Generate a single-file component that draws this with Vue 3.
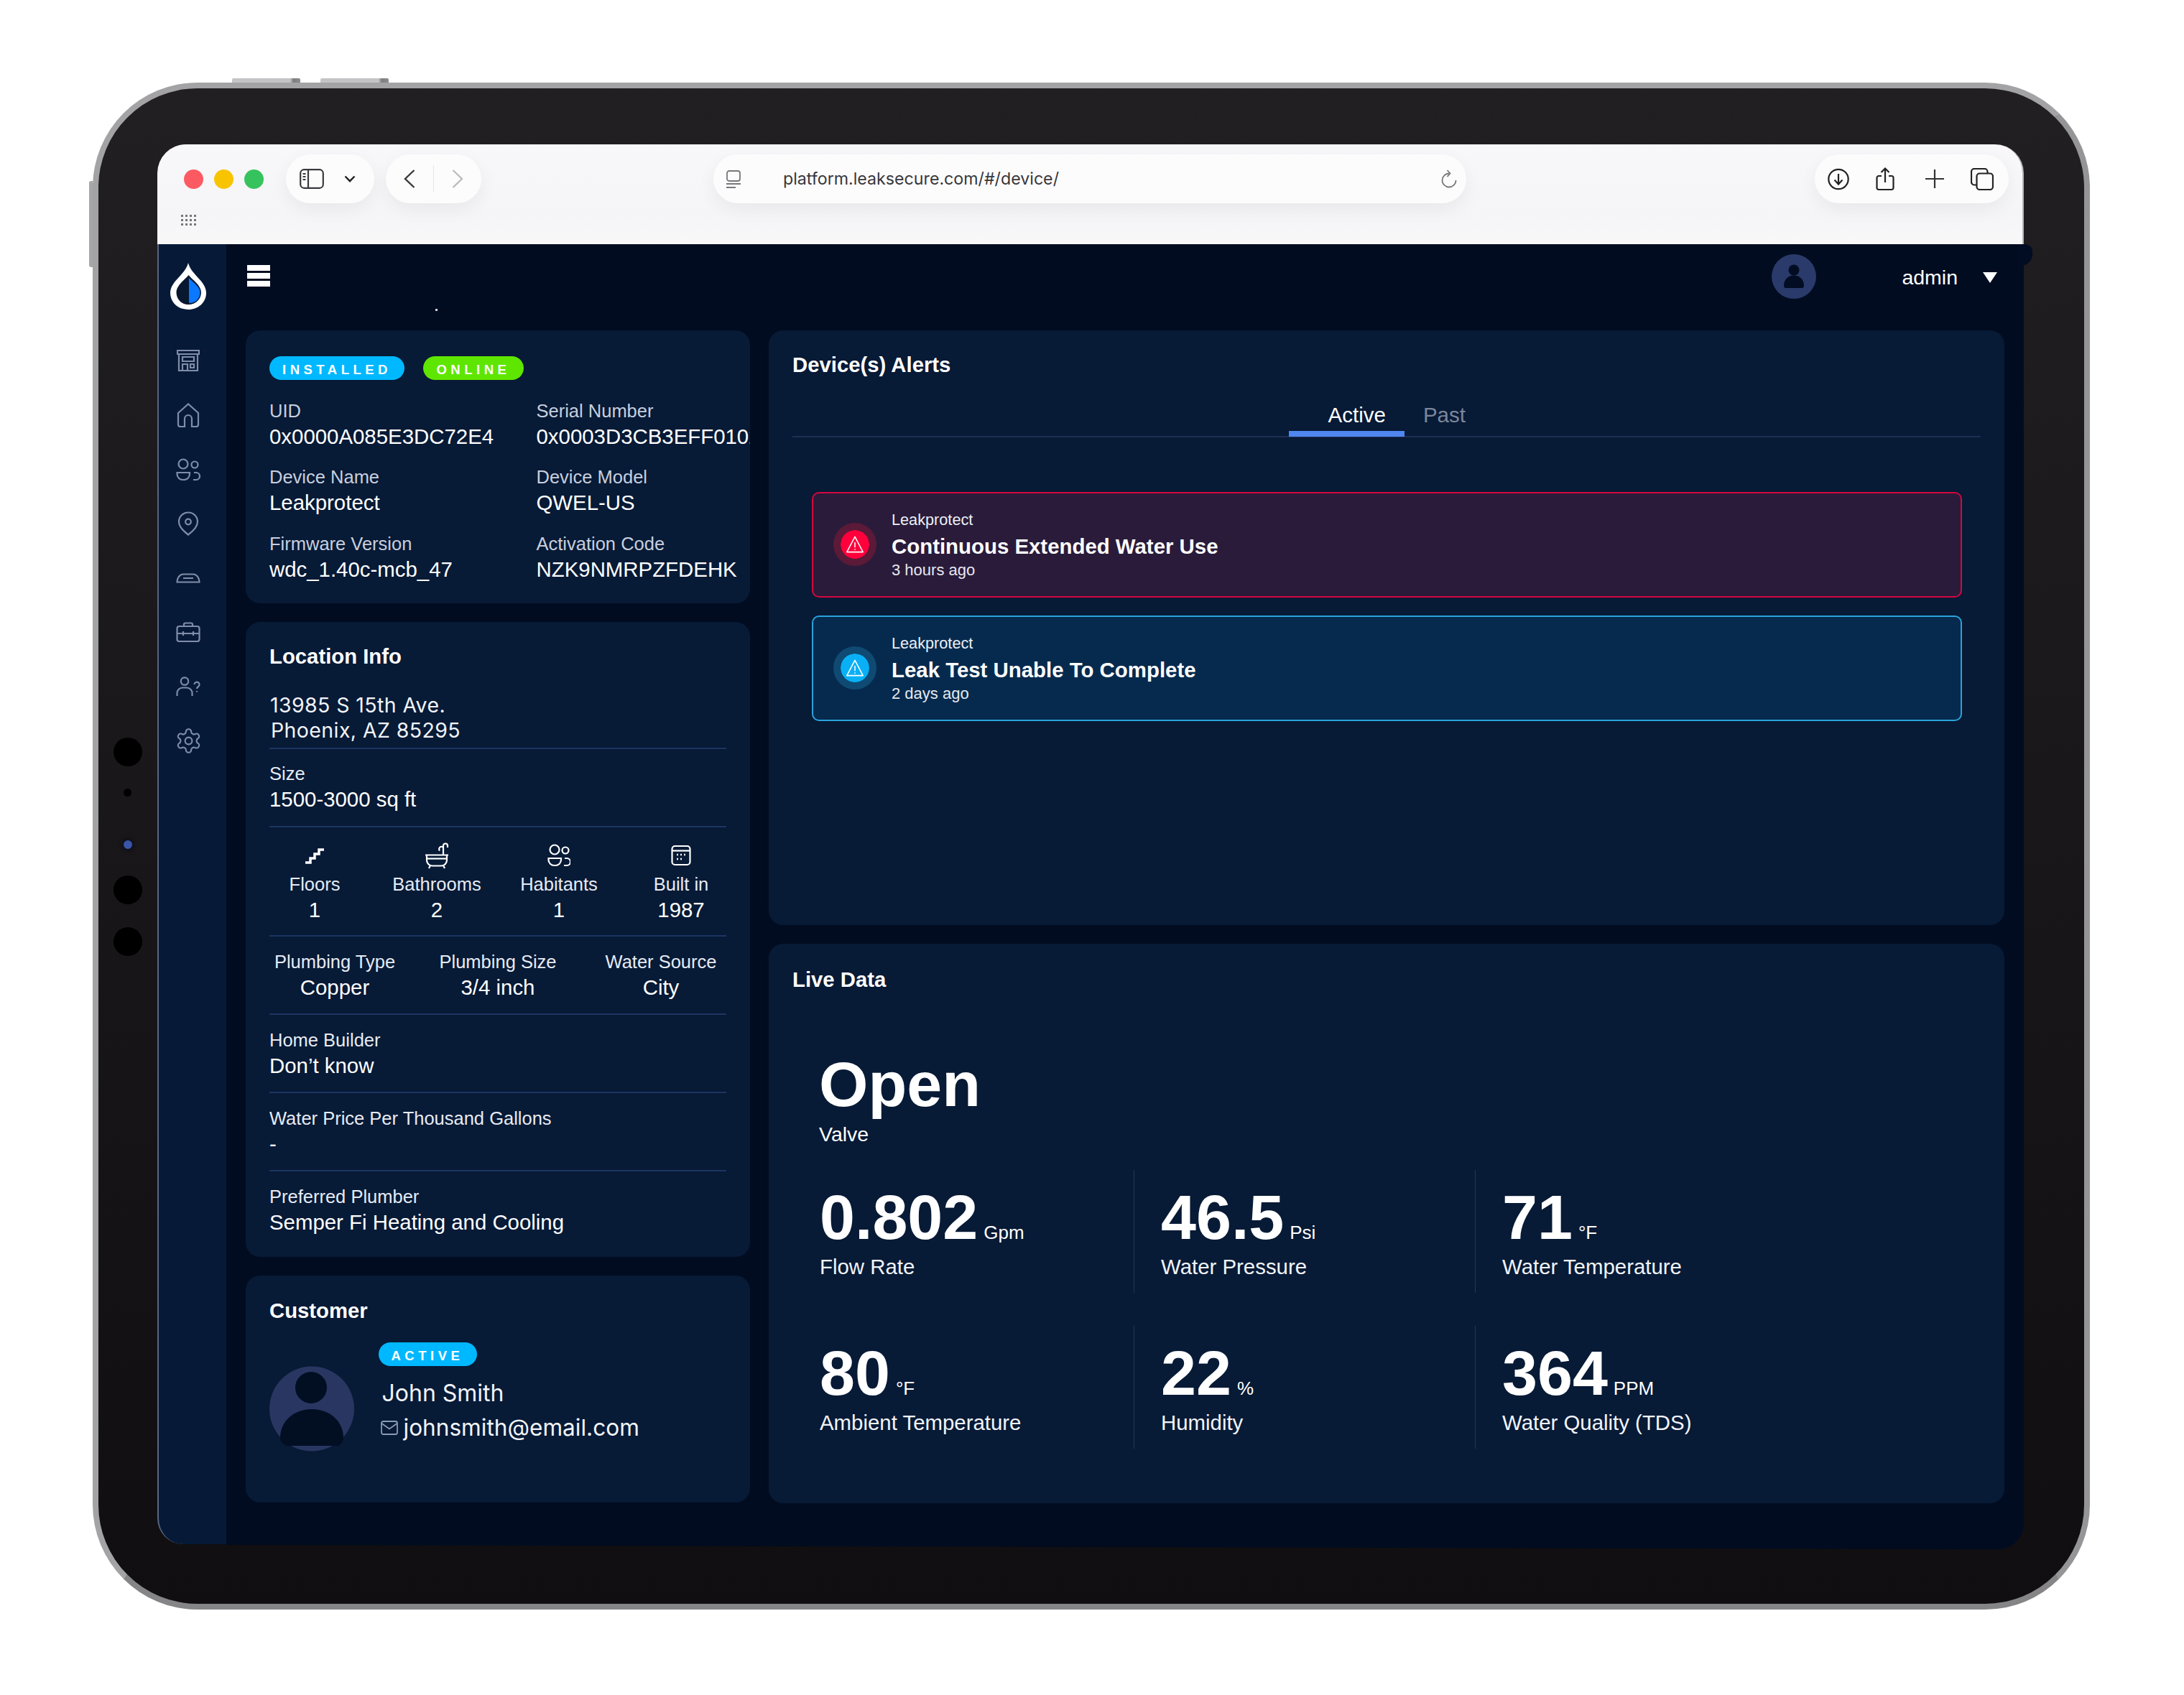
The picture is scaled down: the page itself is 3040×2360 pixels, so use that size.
<script setup>
const deviceRows = [
  { label: 'UID', value: '0x0000A085E3DC72E4' },
  { label: 'Serial Number', value: '0x0003D3CB3EFF0102' },
  { label: 'Device Name', value: 'Leakprotect' },
  { label: 'Device Model', value: 'QWEL-US' },
  { label: 'Firmware Version', value: 'wdc_1.40c-mcb_47' },
  { label: 'Activation Code', value: 'NZK9NMRPZFDEHK' },
]

const plumbing = [
  { label: 'Plumbing Type', value: 'Copper' },
  { label: 'Plumbing Size', value: '3/4 inch' },
  { label: 'Water Source', value: 'City' },
]

const alerts = [
  { id: 1, tone: 'danger', title: 'Continuous Extended Water Use', time: '3 hours ago' },
  { id: 2, tone: 'info', title: 'Leak Test Unable To Complete', time: '2 days ago' },
]

const readings = [
  { value: '0.802', unit: 'Gpm', label: 'Flow Rate' },
  { value: '46.5', unit: 'Psi', label: 'Water Pressure' },
  { value: '71', unit: '°F', label: 'Water Temperature' },
  { value: '80', unit: '°F', label: 'Ambient Temperature' },
  { value: '22', unit: '%', label: 'Humidity' },
  { value: '364', unit: 'PPM', label: 'Water Quality (TDS)' },
]
</script>

<template>
  <div class="page">
    <div class="device">
      <i class="btn-top one"></i>
      <i class="btn-top two"></i>
      <i class="btn-side"></i>
      <i class="cam c1"></i>
      <i class="cam c2"></i>
      <i class="cam c3"></i>
      <i class="cam c4"></i>
      <i class="cam c5"></i>

      <div class="screen">
        <header class="chrome">
          <div class="chrome-row">
            <div class="lights">
              <span class="light red"></span>
              <span class="light yellow"></span>
              <span class="light green"></span>
            </div>
            <div class="pill pill-side">
              <svg width="34" height="28" viewBox="0 0 34 28" fill="none" stroke="#3a3a3e" stroke-width="2.2">
                <rect x="1.2" y="1.2" width="31.6" height="25.6" rx="5" />
                <path d="M12 1.5v25" />
                <path d="M4.5 7h4M4.5 11h4M4.5 15h4" stroke-width="1.8" />
              </svg>
              <svg width="16" height="10" viewBox="0 0 16 10" fill="none" stroke="#222" stroke-width="2.4">
                <path d="M1.5 1.5 8 8.2l6.5-6.7" />
              </svg>
            </div>
            <div class="pill pill-nav">
              <svg width="16" height="26" viewBox="0 0 16 26" fill="none" stroke="#3a3a3e" stroke-width="2.4">
                <path d="M14.5 1 2 13l12.5 12" />
              </svg>
              <span class="nav-sep"></span>
              <svg width="16" height="26" viewBox="0 0 16 26" fill="none" stroke="#bcbcc0" stroke-width="2.4">
                <path d="M1.5 1 14 13 1.500 25" />
              </svg>
            </div>
            <div class="pill pill-url">
              <svg width="20" height="25" viewBox="0 0 20 25" fill="none" stroke="#77777b" stroke-width="1.8">
                <rect x="1" y="1" width="18" height="14" rx="3" />
                <path d="M0 19h20M0 24h13" />
              </svg>
              <span class="url">platform.leaksecure.com/#/device/</span>
              <svg class="reload" width="22" height="26" viewBox="0 0 22 26" fill="none" stroke="#77777b" stroke-width="1.8">
                <path d="M11 5.500a9.500 9.500 0 1 0 9.500 9.500" />
                <path d="M8.500 1 12.500 5.500 8.500 10" />
              </svg>
            </div>
            <div class="pill pill-actions">
              <svg width="30" height="31" viewBox="0 0 30 31" fill="none" stroke="#222" stroke-width="2.2">
                <circle cx="15" cy="15.500" r="13.700" />
                <path d="M15 8v14M9.500 16.500 15 22.500l5.500-6" />
              </svg>
              <svg width="26" height="33" viewBox="0 0 26 33" fill="none" stroke="#222" stroke-width="2.2">
                <path d="M8 12H4a2.500 2.500 0 0 0-2.500 2.500v14A2.500 2.500 0 0 0 4 31h18a2.500 2.500 0 0 0 2.500-2.500v-14A2.500 2.500 0 0 0 22 12h-4" />
                <path d="M13 21V1.500M7.500 7 13 1.500 18.500 7" />
              </svg>
              <svg class="plus" width="26" height="26" viewBox="0 0 26 26" fill="none" stroke="#333" stroke-width="2.200">
                <path d="M13 0v26M0 13h26" />
              </svg>
              <svg width="32" height="31" viewBox="0 0 32 31" fill="none" stroke="#222" stroke-width="2.200">
                <rect x="8.500" y="7.500" width="22.500" height="22.500" rx="4" />
                <path d="M8 23.500H5a4 4 0 0 1-4-4V5a4 4 0 0 1 4-4h14.500a4 4 0 0 1 4 4v2.500" />
              </svg>
            </div>
          </div>
          <svg class="tab-dots" width="22" height="16" viewBox="0 0 22 16" fill="#77777b">
            <path d="M0 0h3v3H0zM6 0h3v3H6zM12 0h3v3h-3zM18 0h3v3h-3zM0 6h3v3H0zM6 6h3v3H6zM12 6h3v3h-3zM18 6h3v3h-3zM0 12h3v3H0zM6 12h3v3H6zM12 12h3v3h-3zM18 12h3v3h-3z" />
          </svg>
        </header>

        <div class="app">
          <aside class="sidebar">
            <svg class="logo" width="50" height="66" viewBox="0 0 50 66">
              <path fill="#fff" d="M25 0C27 8 32 13 38 20 45 27 50 34 50 42 50 55 39 65 25 65 11 65 0 55 0 42 0 34 5 27 12 20 18 13 23 8 25 0Z" />
              <path fill="#08182f" d="M25.500 17C30 23 43 31 43 41 43 51 35 58 25.500 58 16 58 8.500 51 8.500 41 8.500 31 21 23 25.500 17Z" />
              <path fill="#0a78ff" d="M26 21C31 27 41.500 33 41.500 41 41.500 50 35 56 26 56Z" />
            </svg>
            <nav class="side-nav">
              <div class="side-item">
                <svg width="32" height="30" viewBox="0 0 32 30" fill="none">
                  <path d="M1 1h30v5H1zM3 6v23h26V6M8 10h16v6H8zM8 29v-9h7v9M19 20h5v5h-5z" />
                </svg>
              </div>
              <div class="side-item">
                <svg width="32" height="34" viewBox="0 0 32 34" fill="none">
                  <path d="M2 14 16 1.500 30 14v16a3 3 0 0 1-3 3h-6V22a5 5 0 0 0-10 0v11H5a3 3 0 0 1-3-3Z" />
                </svg>
              </div>
              <div class="side-item">
                <svg width="34" height="31" viewBox="0 0 34 31" fill="none">
                  <circle cx="10" cy="8" r="6.500" />
                  <circle cx="26" cy="9" r="4.500" />
                  <path d="M1.500 20H19v2a8 8 0 0 1-8 8H9.500a8 8 0 0 1-8-8ZM25 20h3a5 5 0 0 1 0 10h-4" />
                </svg>
              </div>
              <div class="side-item">
                <svg width="30" height="34" viewBox="0 0 30 34" fill="none">
                  <path d="M15 1.500A13 13 0 0 1 28 14.500C28 22 21 28 15 32.500 9 28 2 22 2 14.500A13 13 0 0 1 15 1.500Z" />
                  <circle cx="15" cy="14.500" r="3.800" />
                </svg>
              </div>
              <div class="side-item">
                <svg width="34" height="14" viewBox="0 0 34 14" fill="none">
                  <path d="M1.500 12.500C1.500 7 5 1.500 10 1.500h14c5 0 8.500 5.500 8.500 11ZM10 7h14" />
                </svg>
              </div>
              <div class="side-item">
                <svg width="34" height="28" viewBox="0 0 34 28" fill="none">
                  <rect x="1.500" y="6" width="31" height="21" rx="3" />
                  <path d="M11 6V3.500a2 2 0 0 1 2-2h8a2 2 0 0 1 2 2V6M1.500 16h31M10 13v6M24 13v6" />
                </svg>
              </div>
              <div class="side-item">
                <svg width="34" height="28" viewBox="0 0 34 28" fill="none">
                  <circle cx="12" cy="6.500" r="5.200" />
                  <path d="M1.500 27v-4a7.500 7.500 0 0 1 7.500-7.500h6a7.500 7.500 0 0 1 7.500 7.500v4M25.500 11a3.500 3.500 0 1 1 5.500 3c-1.500 1-2 1.500-2 3M29 20v1.500" />
                </svg>
              </div>
              <div class="side-item">
                <svg width="39" height="39" viewBox="0 0 24 24" fill="none" class="gear">
                  <path d="M12.220 2h-.44a2 2 0 0 0-2 2v.18a2 2 0 0 1-1 1.730l-.43.25a2 2 0 0 1-2 0l-.15-.08a2 2 0 0 0-2.730.73l-.22.38a2 2 0 0 0 .73 2.730l.15.1a2 2 0 0 1 1 1.720v.51a2 2 0 0 1-1 1.740l-.15.09a2 2 0 0 0-.73 2.730l.22.38a2 2 0 0 0 2.730.73l.15-.08a2 2 0 0 1 2 0l.43.25a2 2 0 0 1 1 1.730V20a2 2 0 0 0 2 2h.44a2 2 0 0 0 2-2v-.18a2 2 0 0 1 1-1.730l.43-.25a2 2 0 0 1 2 0l.15.08a2 2 0 0 0 2.730-.73l.22-.39a2 2 0 0 0-.73-2.730l-.15-.08a2 2 0 0 1-1-1.740v-.5a2 2 0 0 1 1-1.740l.15-.09a2 2 0 0 0 .73-2.730l-.22-.38a2 2 0 0 0-2.730-.73l-.15.08a2 2 0 0 1-2 0l-.43-.25a2 2 0 0 1-1-1.730V4a2 2 0 0 0-2-2z" />
                  <circle cx="12" cy="12" r="3" />
                </svg>
              </div>
            </nav>
          </aside>

          <div class="main">
            <div class="topbar">
              <div class="burger"><span></span><span></span><span></span></div>
              <i class="speck"></i>
              <svg class="top-avatar" width="62" height="62" viewBox="0 0 62 62">
                <circle cx="31" cy="31" r="31" fill="#2a3a6b" />
                <circle cx="31" cy="22" r="7.500" fill="#020c22" />
                <path fill="#020c22" d="M17 44c0-9 6-14.500 14-14.500S45 35 45 44c0 2-1 3-3 3H20c-2 0-3-1-3-3Z" />
              </svg>
              <span class="admin">admin</span>
              <i class="caret"></i>
            </div>

            <div class="content">
              <div class="col-left">
                <section class="card device-card">
                  <div class="badges">
                    <span class="badge blue">INSTALLED</span>
                    <span class="badge green">ONLINE</span>
                  </div>
                  <div class="device-grid">
                    <div v-for="row in deviceRows" :key="row.label" class="field">
                      <div class="label muted">{{ row.label }}</div>
                      <div class="value">{{ row.value }}</div>
                    </div>
                  </div>
                </section>

                <section class="card location-card">
                  <h2 class="card-title">Location Info</h2>
                  <div class="address">
                    <div>13985 S 15th Ave.</div>
                    <div class="addr-2">Phoenix, AZ 85295</div>
                  </div>
                  <div class="section first">
                    <div class="label">Size</div>
                    <div class="value">1500-3000 sq ft</div>
                  </div>
                  <div class="section home-stats">
                    <div class="stat">
                      <svg width="28" height="43" viewBox="0 0 28 43" fill="none" stroke="#fff">
                        <path d="M1 31h7v-6h6v-6h6v-6h7" stroke-width="3.500" />
                      </svg>
                      <div class="label">Floors</div>
                      <div class="value">1</div>
                    </div>
                    <div class="stat">
                      <svg width="34" height="43" viewBox="0 0 34 43" fill="none" stroke="#fff" stroke-width="2.200">
                        <path d="M1 20.500h32M3 20.500v7a8 8 0 0 0 8 8h12a8 8 0 0 0 8-8v-7M8 35l-2 4M26 35l2 4" />
                        <path d="M26 20V7.500a3 3 0 0 1 6 0V10M21 14.500a3 3 0 0 1 5-4.500" />
                        <path d="M4 25.500h26" stroke-width="2.200" />
                      </svg>
                      <div class="label">Bathrooms</div>
                      <div class="value">2</div>
                    </div>
                    <div class="stat">
                      <svg width="32" height="43" viewBox="0 0 32 43" fill="none" stroke="#fff" stroke-width="2.200">
                        <circle cx="10" cy="13" r="6.500" />
                        <circle cx="25" cy="14" r="4.500" />
                        <path d="M1.500 25H19v2a8 8 0 0 1-8 8H9.500a8 8 0 0 1-8-8ZM24 25h3a5 5 0 0 1 0 10h-4" />
                      </svg>
                      <div class="label">Habitants</div>
                      <div class="value">1</div>
                    </div>
                    <div class="stat">
                      <svg width="28" height="43" viewBox="0 0 28 43" fill="none" stroke="#fff" stroke-width="2.200">
                        <rect x="1.500" y="8" width="25" height="26" rx="4" />
                        <path d="M1.500 14.500h25" />
                        <path d="M8 20h2M13 20h2M18 20h2M8 26h2M13 26h2" stroke-width="2.600" />
                      </svg>
                      <div class="label">Built in</div>
                      <div class="value">1987</div>
                    </div>
                  </div>
                  <div class="section plumbing">
                    <div v-for="item in plumbing" :key="item.label" class="stat">
                      <div class="label">{{ item.label }}</div>
                      <div class="value">{{ item.value }}</div>
                    </div>
                  </div>
                  <div class="section">
                    <div class="label">Home Builder</div>
                    <div class="value">Don’t know</div>
                  </div>
                  <div class="section">
                    <div class="label">Water Price Per Thousand Gallons</div>
                    <div class="value">-</div>
                  </div>
                  <div class="section last">
                    <div class="label">Preferred Plumber</div>
                    <div class="value">Semper Fi Heating and Cooling</div>
                  </div>
                </section>

                <section class="card customer-card">
                  <h2 class="card-title">Customer</h2>
                  <div class="customer">
                    <svg class="avatar" width="118" height="119" viewBox="0 0 118 119">
                      <circle cx="59" cy="59.500" r="59" fill="#2a3662" />
                      <circle cx="58" cy="30" r="22" fill="#020e22" />
                      <path fill="#020e22" d="M15 100c0-24 20-40 44-40s44 16 44 40c0 5-3 9-7 11H23c-4-2-8-6-8-11Z" />
                    </svg>
                    <div class="customer-info">
                      <span class="badge blue">ACTIVE</span>
                      <div class="customer-name">John Smith</div>
                      <div class="customer-mail">
                        <svg width="24" height="20" viewBox="0 0 24 20" fill="none" stroke="#8b9ab5" stroke-width="1.800">
                          <rect x="1" y="1" width="22" height="18" rx="2.500" />
                          <path d="m1.500 4 10.500 7.500L22.500 4" />
                        </svg>
                        <span>johnsmith@email.com</span>
                      </div>
                    </div>
                  </div>
                </section>
              </div>

              <div class="col-right">
                <section class="card alerts-card">
                  <h2 class="card-title">Device(s) Alerts</h2>
                  <div class="tabs">
                    <span class="tab active">Active</span>
                    <span class="tab">Past</span>
                  </div>
                  <div class="alert-list">
                    <div v-for="alert in alerts" :key="alert.id" class="alert" :class="alert.tone">
                      <div class="alert-icon">
                        <svg width="26" height="26" viewBox="0 0 22 22" fill="none" stroke="#fff" stroke-width="1.300">
                          <path d="M11 2 20.500 20h-19Z" stroke-linejoin="round" />
                          <path d="M11 8.500v6M11 16.200v1.300" />
                        </svg>
                      </div>
                      <div class="alert-text">
                        <div class="alert-device">Leakprotect</div>
                        <div class="alert-title">{{ alert.title }}</div>
                        <div class="alert-time">{{ alert.time }}</div>
                      </div>
                    </div>
                  </div>
                </section>

                <section class="card live-card">
                  <h2 class="card-title">Live Data</h2>
                  <div class="valve">Open</div>
                  <div class="valve-label">Valve</div>
                  <div class="live-grid">
                    <div v-for="item in readings" :key="item.label" class="reading">
                      <div class="reading-value">
                        <span class="number">{{ item.value }}</span>
                        <span class="unit">{{ item.unit }}</span>
                      </div>
                      <div class="reading-label">{{ item.label }}</div>
                    </div>
                  </div>
                </section>
              </div>
            </div>
          </div>
        </div>
        <i class="corner-bump"></i>
      </div>
    </div>
  </div>
</template>

<style scoped>
.page {
  width: 3040px;
  height: 2360px;
  padding: 115px 0 0 129px;
  box-sizing: border-box;
  background: #fff;
  font-family: "Liberation Sans", Arial, sans-serif;
  color: #fff;
  overflow: hidden;
}

.device {
  position: relative;
  width: 2780px;
  height: 2126px;
  box-sizing: border-box;
  border: 8px solid #a3a2a5;
  border-bottom-color: #858487;
  border-right-color: #959497;
  border-radius: 146px;
  background: linear-gradient(#211f21, #100e10);
  padding: 78px 0 0 82px;
}

.btn-top {
  position: absolute;
  top: -14px;
  height: 6px;
  width: 95px;
  background: linear-gradient(90deg, #c4c4c6 85%, #7d7d80 90%, #8d8d90);
  border-radius: 2px 2px 0 0;
}
.btn-top.one { left: 186px; }
.btn-top.two { left: 309px; }
.btn-side {
  position: absolute;
  left: -13px;
  top: 129px;
  width: 5px;
  height: 120px;
  background: #a6a6a8;
  border-radius: 3px 0 0 3px;
}

.cam {
  position: absolute;
  left: 41px;
  width: 40px;
  height: 40px;
  margin-left: -20px;
  border-radius: 50%;
  background: #000;
}
.cam.c1 { top: 904px; }
.cam.c2 { top: 975px; left: 55px; width: 11px; height: 11px; }
.cam.c3 {
  top: 1047px;
  left: 55px;
  width: 12px;
  height: 12px;
  background: #3a55a8;
  box-shadow: 0 0 5px 2px rgba(10, 14, 30, 0.9);
}
.cam.c4 { top: 1096px; }
.cam.c5 { top: 1168px; }

.screen {
  position: relative;
  width: 2598px;
  height: 1956px;
  display: flex;
  flex-direction: column;
}

.chrome {
  height: 139px;
  box-sizing: border-box;
  padding-top: 14px;
  background: linear-gradient(#f8f7f9, #f5f4f6 70%, #f8f8f9);
  border-radius: 40px 40px 0 0;
  border-right: 2px solid #b5b5b8;
  flex: none;
}

.chrome-row {
  display: flex;
  align-items: center;
  height: 68px;
}

.lights {
  display: flex;
  gap: 15px;
  margin-left: 36.500px;
  margin-right: 31.500px;
}

.light {
  width: 27px;
  height: 27px;
  border-radius: 50%;
}
.light.red { background: #fb5a62; }
.light.yellow { background: #f8c400; }
.light.green { background: #36c35d; }

.pill {
  display: flex;
  align-items: center;
  height: 68px;
  box-sizing: border-box;
  background: #fdfcfd;
  border-radius: 34px;
  box-shadow: 0 8px 26px rgba(0, 0, 0, 0.06);
}

.pill-side {
  width: 123px;
  padding-left: 19px;
  gap: 28px;
  margin-right: 16px;
}

.pill-nav {
  width: 133px;
  padding-left: 25px;
  margin-right: 323px;
}

.nav-sep {
  width: 1px;
  height: 38px;
  background: #e7e7ea;
  margin: 0 25px;
}

.pill-url {
  width: 1048px;
  padding-left: 18px;
  margin-right: 485px;
}

.url {
  margin-left: 59px;
  font-family: Inter, sans-serif;
  font-size: 23.200px;
  color: #37373b;
}

.reload {
  margin-left: auto;
  margin-right: 13px;
}

.pill-actions {
  width: 270px;
  padding-left: 18px;
  gap: 37px;
}

.pill-actions .plus {
  margin-left: 6px;
}

.tab-dots {
  display: block;
  margin: 16px 0 0 33px;
}

.app {
  flex: 1;
  display: flex;
  min-height: 0;
}

.sidebar {
  width: 96px;
  box-sizing: border-box;
  flex: none;
  margin-bottom: 7px;
  background: #061a38;
  border-left: 2px solid #5a6480;
  border-bottom-left-radius: 36px;
  padding: 26px 12px 0 0;
  display: flex;
  flex-direction: column;
  align-items: center;
}

.logo {
  display: block;
}

.side-nav {
  margin-top: 32px;
}

.side-item {
  height: 75.700px;
  width: 44px;
  display: flex;
  align-items: center;
  justify-content: center;
}

.side-item svg {
  stroke: #7f8da8;
  stroke-width: 2.200;
}

.side-item svg.gear {
  stroke-width: 1.300;
}

.main {
  flex: 1;
  min-width: 0;
  background: #010c20;
  border-bottom-right-radius: 36px;
  /* the photographed screen sits slightly tilted along its bottom edge */
  clip-path: polygon(0 0, 100% 0, 100% 100%, 97% 100%, 0 calc(100% - 6px));
  display: flex;
  flex-direction: column;
}

.topbar {
  position: relative;
  height: 120px;
  flex: none;
  box-sizing: border-box;
  padding: 14px 37px 0 29px;
  display: flex;
  align-items: flex-start;
}

.burger {
  display: flex;
  flex-direction: column;
  gap: 3px;
  width: 32px;
  margin-top: 15px;
}

.burger span {
  height: 8px;
  background: #fff;
}

.speck {
  position: absolute;
  left: 291px;
  top: 90px;
  width: 3px;
  height: 3px;
  background: #cfd5e0;
}

.top-avatar {
  margin-left: auto;
}

.admin {
  margin: 1px 0 0 119px;
  font-size: 28.500px;
  line-height: 62px;
  color: #fff;
}

.caret {
  margin: 25px 0 0 35px;
  width: 0;
  height: 0;
  border-left: 10.500px solid transparent;
  border-right: 10.500px solid transparent;
  border-top: 15px solid #fff;
}

.content {
  flex: 1;
  min-height: 0;
  display: flex;
  gap: 26px;
  padding: 0 27px 64px;
}

.col-left {
  width: 702px;
  flex: none;
  display: flex;
  flex-direction: column;
  gap: 26px;
}

.col-right {
  flex: 1;
  min-width: 0;
  display: flex;
  flex-direction: column;
  gap: 26px;
}

.card {
  background: #071a36;
  border-radius: 20px;
  box-sizing: border-box;
  padding: 0 33px;
  overflow: hidden;
}

.card-title {
  margin: 0;
  font-size: 29.300px;
  line-height: 36px;
  font-weight: 700;
}

.device-card {
  height: 380px;
  padding-top: 36px;
}

.badges {
  display: flex;
  gap: 26px;
}

.badge {
  display: inline-block;
  height: 33px;
  line-height: 37px;
  box-sizing: border-box;
  padding: 0 18.500px 0 18px;
  border-radius: 17px;
  font-size: 18.500px;
  font-weight: 700;
  letter-spacing: 5.500px;
  white-space: nowrap;
}
.badge.blue { background: #00b8ff; }
.badge.green { background: #5fe600; }

.device-grid {
  display: grid;
  grid-template-columns: 371.500px 1fr;
  row-gap: 22.500px;
  margin-top: 25.500px;
}

.field {
  white-space: nowrap;
}

.label {
  font-size: 25.500px;
  line-height: 35px;
  color: #e6ebf3;
  white-space: nowrap;
}

.label.muted {
  color: #c7cfdf;
}

.value {
  font-size: 29.400px;
  line-height: 35px;
  color: #fff;
  white-space: nowrap;
}

.location-card {
  height: 884px;
  padding-top: 30px;
}

.address {
  margin-top: 32px;
  padding-bottom: 6.500px;
  border-bottom: 2px solid #1c3562;
  font-family: Inter, sans-serif;
  font-size: 28.500px;
  letter-spacing: 0.400px;
  line-height: 35px;
  color: #f1f4f9;
  padding-left: 1px;
}

.addr-2 {
  margin-left: 1px;
}

.section {
  padding: 18.500px 0 18.500px;
  border-bottom: 2px solid #1c3562;
}

.section.first {
  padding: 17.500px 0 19.500px;
}

.section.last {
  border-bottom: 0;
}

.home-stats {
  display: grid;
  grid-template-columns: repeat(4, 170px);
  justify-content: center;
  padding-top: 18px;
  padding-bottom: 18px;
}

.plumbing {
  display: grid;
  grid-template-columns: repeat(3, 227px);
  justify-content: center;
}

.stat {
  text-align: center;
}

.stat svg {
  display: block;
  margin: 0 auto 1px;
}

.customer-card {
  height: 316px;
  padding-top: 31px;
}

.customer {
  display: flex;
  gap: 33.500px;
  margin-top: 25.500px;
}

.avatar {
  margin-top: 33px;
  flex: none;
}

.customer-info {
  display: flex;
  flex-direction: column;
  align-items: flex-start;
}

.customer-name {
  margin: 18px 0 0 5px;
  font-family: Inter, sans-serif;
  font-size: 32px;
  line-height: 40px;
  color: #f1f4f9;
}

.customer-mail {
  display: flex;
  align-items: center;
  gap: 8px;
  margin: 8px 0 0 3px;
  font-family: Inter, sans-serif;
  font-size: 31.600px;
  line-height: 40px;
  color: #f1f4f9;
}

.alerts-card {
  flex: 1;
  min-height: 0;
  padding-top: 30px;
}

.tabs {
  display: flex;
  justify-content: center;
  margin-top: 33.500px;
  border-bottom: 2px solid #1f2f52;
}

.tab {
  padding: 0 26px 13px;
  font-size: 29.500px;
  line-height: 35px;
  color: #7b869c;
  margin-bottom: -1px;
}

.tab.active {
  padding: 0 26px 5px 54.500px;
  color: #fff;
  border-bottom: 8px solid #4f86ef;
}

.alert-list {
  margin: 76px 26px 0 27px;
  display: flex;
  flex-direction: column;
  gap: 25px;
}

.alert {
  height: 147px;
  box-sizing: border-box;
  display: flex;
  align-items: center;
  gap: 21px;
  padding-left: 28px;
  border-radius: 10px;
  border: 2px solid;
}

.alert.danger {
  background: #2a1b3a;
  border-color: #d5073f;
}

.alert.info {
  background: #062a4e;
  border-color: #2aa3dc;
}

.alert-icon {
  width: 40px;
  height: 40px;
  border-radius: 50%;
  display: flex;
  align-items: center;
  justify-content: center;
  border-style: solid;
  border-width: 10px;
  background-clip: padding-box;
  flex: none;
}

.danger .alert-icon {
  background-color: #ff003c;
  border-color: #5a1a38;
}

.info .alert-icon {
  background-color: #0ab0f5;
  border-color: #0f4a73;
}

.alert-device {
  margin-top: 2px;
  font-size: 21.700px;
  line-height: 30px;
  color: #eceff5;
}

.alert-title {
  margin-top: 4px;
  font-size: 29.400px;
  line-height: 36px;
  font-weight: 700;
}

.alert-time {
  font-size: 22px;
  line-height: 30px;
  color: #e6e8ef;
}

.live-card {
  height: 779px;
  flex: none;
  padding-top: 32px;
}

.valve {
  margin: 84px 0 0 37px;
  font-size: 88px;
  line-height: 88px;
  font-weight: 700;
}

.valve-label {
  margin: 7.500px 0 0 37px;
  font-size: 28.500px;
  line-height: 35px;
}

.live-grid {
  margin-top: 32.500px;
  display: grid;
  grid-template-columns: repeat(3, 475px);
  grid-auto-rows: 171px;
  row-gap: 46px;
}

.reading {
  padding: 22px 0 0 37px;
  border-left: 1px solid #233758;
  box-sizing: border-box;
}

.reading:nth-child(3n + 1) {
  border-left-color: transparent;
}

.reading-value {
  display: flex;
  align-items: baseline;
  gap: 8px;
}

.number {
  font-size: 88px;
  line-height: 88px;
  font-weight: 700;
}

.unit {
  font-size: 26px;
}

.reading-label {
  margin-top: 6.500px;
  font-size: 29.400px;
  line-height: 35px;
  color: #f1f4f9;
}

.corner-bump {
  position: absolute;
  left: 2590px;
  top: 139px;
  width: 20px;
  height: 30px;
  background: #020c22;
  border-radius: 0 10px 16px 0;
}
</style>

<style>
body {
  background: #fff;
}
</style>
